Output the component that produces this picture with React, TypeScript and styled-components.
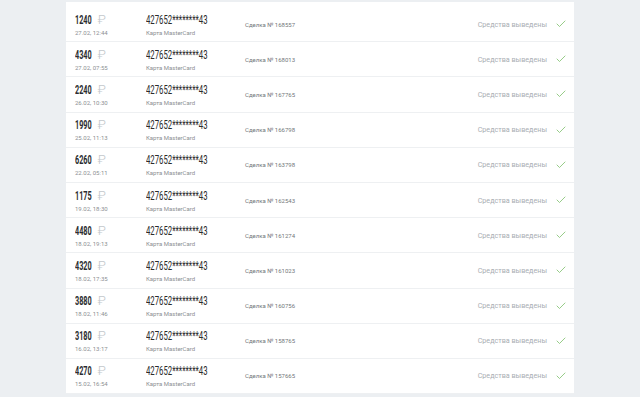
import React from 'react';
import styled, { createGlobalStyle } from 'styled-components';
import { Check } from 'lucide-react';

const GlobalStyle = createGlobalStyle`
	html, body {
		margin: 0;
		padding: 0;
		background: #eceff2;
		font-family: Roboto, 'Liberation Sans', sans-serif;
	}
`;

const Page = styled.div`
	display: flex;
	height: 397px;
	overflow: hidden;
	padding: 2px 0 0 66px;
	box-sizing: border-box;
`;

const Panel = styled.div`
	width: 508px;
	padding-top: 5px;
	background: #fff;
	display: flex;
	flex-direction: column;
	align-self: flex-start;
`;

const Row = styled.div`
	display: grid;
	grid-template-columns: 71px 99px 1fr auto;
	align-items: center;
	height: 35.2px;
	box-sizing: border-box;
	padding: 0 7px 0 9px;
	border-bottom: 1px solid #eef0f2;
`;

const Cell = styled.div`
	display: flex;
	flex-direction: column;
	align-items: flex-start;
	padding-top: 1px;
`;

// narrow display face: the reference uses a condensed font
const Squeeze = styled.span<{ $k: number }>`
	display: inline-block;
	white-space: nowrap;
	transform: scaleX(${(p) => p.$k});
	transform-origin: left center;
`;

const Amount = styled(Squeeze)`
	font-size: 13px;
	line-height: 13px;
	font-weight: 700;
	color: #2b2d30;
`;

const Rub = styled.span<{ $k: number }>`
	display: inline-block;
	margin-left: 10px;
	transform: scaleX(${(p) => 1 / p.$k});
	transform-origin: left center;
	font-weight: 300;
	color: #c3c7cb;
	font-family: Roboto, 'DejaVu Sans', sans-serif;
`;

const Small = styled.span`
	font-size: 6px;
	line-height: 8px;
	margin-top: 3px;
	color: #8c8f93;
	white-space: nowrap;
`;

const CardNo = styled(Squeeze)`
	font-size: 12.5px;
	line-height: 13px;
	font-weight: 400;
	color: #2a2a2a;
`;

const Deal = styled.span`
	font-size: 6px;
	color: #73777b;
	white-space: nowrap;
`;

const Status = styled.div`
	display: flex;
	align-items: center;
	gap: 8px;
	font-size: 7.2px;
	color: #a9aeb3;
	white-space: nowrap;
	svg {
		color: #7cbf69;
	}
`;

type Payout = { sum: string; date: string; deal: string };

const payouts: Payout[] = [
	{ sum: '1240', date: '27.02, 12:44', deal: '168557' },
	{ sum: '4340', date: '27.02, 07:55', deal: '168013' },
	{ sum: '2240', date: '26.02, 10:30', deal: '167765' },
	{ sum: '1990', date: '25.02, 11:13', deal: '166798' },
	{ sum: '6260', date: '22.02, 05:11', deal: '163798' },
	{ sum: '1175', date: '19.02, 18:30', deal: '162543' },
	{ sum: '4480', date: '18.02, 19:13', deal: '161274' },
	{ sum: '4320', date: '18.02, 17:35', deal: '161023' },
	{ sum: '3880', date: '18.02, 11:46', deal: '160756' },
	{ sum: '3180', date: '16.02, 13:17', deal: '158765' },
	{ sum: '4270', date: '15.02, 16:54', deal: '157665' },
];

const K = 0.56;

export default function App(): JSX.Element {
	return (
		<>
			<GlobalStyle />
			<Page>
				<Panel>
					{payouts.map((p) => (
						<Row key={p.deal}>
							<Cell>
								<Amount $k={K}>
									{p.sum}
									<Rub $k={K}>₽</Rub>
								</Amount>
								<Small>{p.date}</Small>
							</Cell>
							<Cell>
								<CardNo $k={0.62}>427652********43</CardNo>
								<Small>Карта MasterCard</Small>
							</Cell>
							<Deal>Сделка № {p.deal}</Deal>
							<Status>
								Средства выведены
								<Check size={12} strokeWidth={1.6} />
							</Status>
						</Row>
					))}
				</Panel>
			</Page>
		</>
	);
}
